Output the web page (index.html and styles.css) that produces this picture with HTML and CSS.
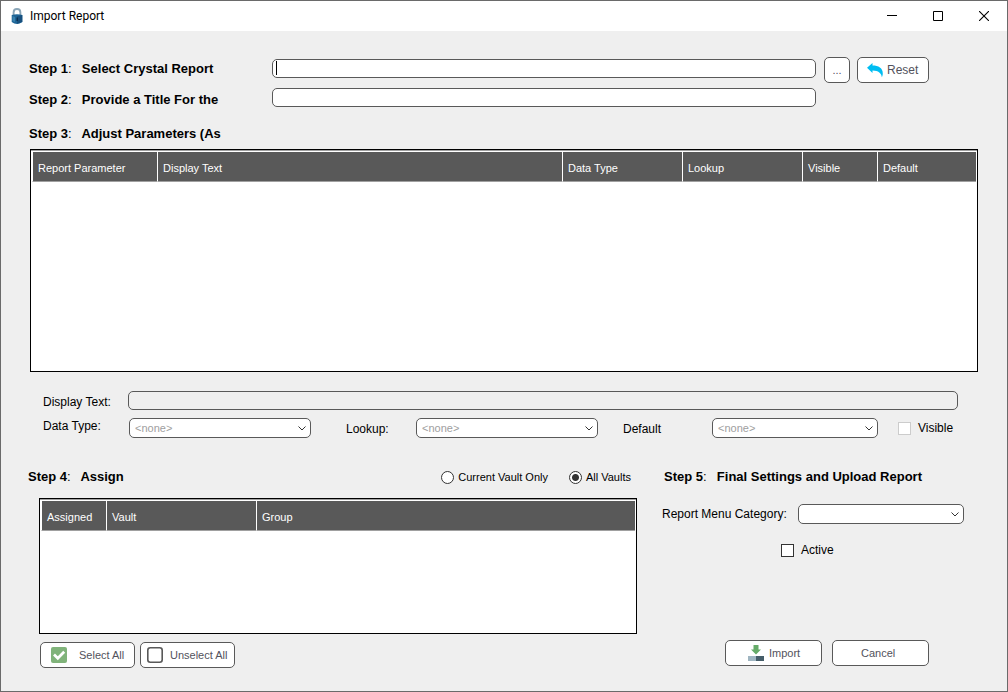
FILE: index.html
```html
<!DOCTYPE html>
<html lang="en">
<head>
<meta charset="utf-8">
<meta name="viewport" content="width=device-width, initial-scale=1">
<title>Import Report</title>
<link rel="stylesheet" href="styles.css">
</head>
<body>
<div class="window">
  <header class="titlebar">
    <svg class="app-icon" width="12" height="17" viewBox="0 0 12 17" aria-hidden="true">
      <path d="M2.600 8V4.400C2.600 2.300 4 1 6 1s3.400 1.300 3.400 3.400V8" fill="none" stroke="#8aa5b7" stroke-width="1.900"/>
      <path d="M.7 7Q6 5.300 11.300 7V14Q6 17.800 .7 14z" fill="#1d6496"/>
      <path d="M6 8.500l5.300-1.500v7L6 15.800z" fill="#17507e"/>
      <path d="M1.500 8l2.500 1v5l-2.500-1z" fill="#3a82ae"/>
      <path d="M5.500 9.500h1.500v3.500h-1.500z" fill="#0b2f52"/>
    </svg>
    <h1 class="title">Import Report</h1>
    <div class="window-buttons">
      <button class="window-button" type="button" aria-label="Minimize"><svg width="10" height="10" viewBox="0 0 10 10"><path d="M0 4.500h10" stroke="#000"/></svg></button>
      <button class="window-button" type="button" aria-label="Maximize"><svg width="10" height="10" viewBox="0 0 10 10"><path d="M.5.5h9v9h-9z" fill="none" stroke="#000"/></svg></button>
      <button class="window-button" type="button" aria-label="Close"><svg width="10" height="10" viewBox="0 0 10 10"><path d="M0 0l10 10M10 0L0 10" stroke="#000" stroke-width="1.100"/></svg></button>
    </div>
  </header>

  <main class="content">
    <section class="source">
      <label class="step" for="report-file">Step 1<span class="colon">:</span>&nbsp; Select Crystal Report</label>
      <div class="file-field">
        <input class="text-box" id="report-file" type="text">
        <span class="caret"></span>
      </div>
      <div class="source-buttons">
        <button class="button browse" type="button">...</button>
        <button class="button reset" type="button">
          <svg width="16" height="15" viewBox="0 0 16 15" aria-hidden="true"><path d="M0 4.800L5.500 0v2.500c6 0 10.300 2.500 10.300 8 0 1.500-.4 2.800-1 3.700C14.500 10.500 11.500 7.600 5.500 7.600V10z" fill="#00bdf2"/></svg>
          Reset
        </button>
      </div>
      <label class="step" for="report-title">Step 2<span class="colon">:</span>&nbsp; Provide a Title For the</label>
      <input class="text-box" id="report-title" type="text">
    </section>

    <h2 class="step parameters-heading">Step 3<span class="colon">:</span>&nbsp; Adjust Parameters (As</h2>
    <div class="grid-box parameters">
      <table class="data-grid">
        <colgroup><col class="col-parameter"><col><col class="col-medium"><col class="col-medium"><col class="col-visible"><col class="col-default"></colgroup>
        <thead><tr><th>Report Parameter</th><th>Display Text</th><th>Data Type</th><th>Lookup</th><th>Visible</th><th>Default</th></tr></thead>
      </table>
    </div>

    <section class="details">
      <div class="display-row">
        <label for="display-text">Display Text:</label>
        <input class="text-box" id="display-text" type="text" disabled>
      </div>
      <div class="options-row">
        <label class="label-top" for="data-type">Data Type:</label>
        <div class="drop-down"><select id="data-type" disabled><option>&lt;none&gt;</option></select><svg class="chevron" width="8" height="5" viewBox="0 0 8 5"><path d="M.5.5L4 4 7.500.5"/></svg></div>
        <label class="label-lookup" for="lookup">Lookup:</label>
        <div class="drop-down"><select id="lookup" disabled><option>&lt;none&gt;</option></select><svg class="chevron" width="8" height="5" viewBox="0 0 8 5"><path d="M.5.5L4 4 7.500.5"/></svg></div>
        <label class="label-default" for="default-value">Default</label>
        <div class="drop-down"><select id="default-value" disabled><option>&lt;none&gt;</option></select><svg class="chevron" width="8" height="5" viewBox="0 0 8 5"><path d="M.5.5L4 4 7.500.5"/></svg></div>
        <label class="choice visible-choice"><input class="check" type="checkbox" disabled>Visible</label>
      </div>
    </section>

    <div class="bottom">
      <section class="assign">
        <div class="assign-head">
          <h2 class="step">Step 4<span class="colon">:</span>&nbsp; Assign</h2>
          <div class="scope">
            <label class="choice radio-choice"><input class="radio" type="radio" name="scope">Current Vault Only</label>
            <label class="choice radio-choice"><input class="radio" type="radio" name="scope" checked>All Vaults</label>
          </div>
        </div>
        <div class="grid-box vaults">
          <table class="data-grid">
            <colgroup><col class="col-assigned"><col class="col-vault"><col></colgroup>
            <thead><tr><th>Assigned</th><th>Vault</th><th>Group</th></tr></thead>
          </table>
        </div>
        <div class="select-buttons">
          <button class="button select-all" type="button">
            <svg width="16" height="16" viewBox="0 0 16 16" aria-hidden="true"><rect width="16" height="16" rx="2" fill="#80b37a"/><path d="M3 7.500l3.800 3.800 6.400-6.500" fill="none" stroke="#fff" stroke-width="2.700"/></svg>
            Select All
          </button>
          <button class="button unselect-all" type="button">
            <svg width="16" height="16" viewBox="0 0 16 16" aria-hidden="true"><rect x=".8" y=".8" width="14.400" height="14.400" rx="2.500" fill="none" stroke="#595959" stroke-width="1.600"/></svg>
            Unselect All
          </button>
        </div>
      </section>

      <section class="final">
        <h2 class="step">Step 5<span class="colon">:</span>&nbsp; Final Settings and Upload Report</h2>
        <div class="category-row">
          <label for="category">Report Menu Category:</label>
          <div class="drop-down"><select id="category"><option></option></select><svg class="chevron" width="8" height="5" viewBox="0 0 8 5"><path d="M.5.5L4 4 7.500.5"/></svg></div>
        </div>
        <label class="choice active-choice"><input class="check" type="checkbox">Active</label>
        <div class="action-buttons">
          <button class="button import" type="button">
            <svg width="16" height="16" viewBox="0 0 16 16" aria-hidden="true"><path d="M5.500 0h5v4.500H13L8 9.500 3 4.500h2.500z" fill="#65ab68"/><path d="M0 11h8v5H0z" fill="#9fb5c1"/><path d="M8 11h8v5H8z" fill="#455d69"/></svg>
            Import
          </button>
          <button class="button cancel" type="button">Cancel</button>
        </div>
      </section>
    </div>
  </main>
</div>
</body>
</html>
```
FILE: styles.css
```css
* {
  box-sizing: border-box;
}

body {
  margin: 0;
  font-family: "Liberation Sans", Arial, sans-serif;
  font-size: 12px;
  line-height: 16px;
  color: #000;
}

button,
input,
select {
  font: inherit;
  margin: 0;
}

svg {
  display: block;
  flex: none;
}

.window {
  display: flex;
  flex-direction: column;
  min-height: 100vh;
  border: 1px solid #6a6a6a;
  background: #efefef;
}

.titlebar {
  display: flex;
  align-items: center;
  height: 30px;
  padding-left: 10px;
  background: #fff;
}

.title {
  flex: 1;
  margin: 0 0 0 7px;
  font: 400 12px/16px Roboto, "Noto Sans", sans-serif;
}

.window-buttons {
  display: flex;
}

.window-button {
  display: flex;
  align-items: center;
  justify-content: center;
  width: 46px;
  height: 28px;
  padding: 0;
  border: 0;
  background: none;
}

.content {
  display: flex;
  flex: 1;
  flex-direction: column;
  padding: 26px 29px 23px 27px;
}

.step {
  margin: 0;
  font-size: 13px;
  font-weight: 700;
  line-height: 24px;
  white-space: nowrap;
}

.colon {
  margin-right: 3px;
  font-weight: 400;
}

.source {
  display: grid;
  grid-template-columns: 243px minmax(0, 1fr) auto;
  row-gap: 5px;
  align-items: start;
  padding: 0 49px 0 1px;
}

.text-box {
  display: block;
  width: 100%;
  height: 19px;
  padding: 0 6px;
  border: 1px solid #595959;
  border-radius: 5px;
  background: #fff;
}

.text-box:disabled {
  background: #efefef;
}

.file-field {
  position: relative;
  padding-top: 2px;
}

.caret {
  position: absolute;
  top: 4px;
  left: 4px;
  width: 1px;
  height: 14px;
  background: #000;
}

.source-buttons {
  display: flex;
  gap: 7px;
  margin-left: 8px;
}

.button {
  display: flex;
  align-items: center;
  height: 26px;
  padding: 0;
  border: 1px solid #595959;
  border-radius: 5px;
  background: #fff;
  color: #52525c;
  font-size: 11px;
  white-space: nowrap;
}

.browse {
  justify-content: center;
  width: 26px;
}

.reset {
  gap: 4px;
  width: 72px;
  padding-left: 9px;
  font-size: 12px;
}

.parameters-heading {
  margin: 10px 0 3px 1px;
}

.grid-box {
  padding: 2px 1px 1px;
  border: 1px solid #000;
  background: #fff;
  box-shadow: inset 0 1px #a0a0a0;
}

.parameters {
  flex: 1;
  min-height: 223px;
  margin-left: 2px;
}

.data-grid {
  width: 100%;
  table-layout: fixed;
  border-spacing: 0;
}

.data-grid th {
  height: 30px;
  padding: 2px 5px 0;
  border-bottom: 1px solid #a0a0a0;
  border-left: 1px solid #fff;
  background: #595959;
  color: #fff;
  font-size: 11px;
  font-weight: 400;
  text-align: left;
}

.col-parameter {
  width: 125px;
}

.col-medium {
  width: 120px;
}

.col-visible {
  width: 75px;
}

.col-default {
  width: 99px;
}

.col-assigned {
  width: 65px;
}

.col-vault {
  width: 150px;
}

.details {
  display: flex;
  flex-direction: column;
  gap: 8px;
  margin: 19px 20px 0 15px;
}

.display-row {
  display: grid;
  grid-template-columns: 85px minmax(0, 1fr);
  align-items: end;
}

.options-row {
  display: grid;
  grid-template-columns: 86px minmax(0, 182fr) 105px minmax(0, 182fr) 114px minmax(0, 166fr) 80px;
  align-items: center;
}

.label-top {
  align-self: start;
}

.label-lookup {
  padding: 2px 0 0 35px;
}

.label-default {
  padding: 2px 0 0 25px;
}

.drop-down {
  display: grid;
  align-items: center;
}

.drop-down select {
  grid-area: 1 / 1;
  width: 100%;
  height: 20px;
  padding: 0 20px 0 5px;
  border: 1px solid #595959;
  border-radius: 5px;
  appearance: none;
  background: #fff;
  color: #000;
  font-size: 11px;
}

.drop-down select:disabled {
  color: #a0a0a0;
  opacity: 1;
}

.chevron {
  grid-area: 1 / 1;
  justify-self: end;
  margin-right: 5px;
  fill: none;
  stroke: #333;
  pointer-events: none;
}

.choice {
  display: flex;
  align-items: center;
  gap: 7px;
}

.visible-choice {
  padding-left: 20px;
}

.check,
.radio {
  flex: none;
  width: 13px;
  height: 13px;
  border: 1px solid #333;
  appearance: none;
  background: #fff;
}

.check:disabled {
  border-color: #ccc;
}

.radio {
  border-radius: 50%;
}

.radio:checked {
  background: radial-gradient(circle, #333 3px, #fff 4px);
}

.bottom {
  display: grid;
  grid-template-columns: minmax(0, 609fr) minmax(0, 316fr);
  column-gap: 25px;
  margin-top: 27px;
}

.assign-head {
  display: flex;
  align-items: center;
  justify-content: space-between;
  padding-right: 6px;
}

.scope {
  display: flex;
  gap: 21px;
}

.radio-choice {
  gap: 4px;
  font-size: 11px;
}

.vaults {
  min-height: 136px;
  margin: 9px 0 8px 11px;
}

.select-buttons {
  display: flex;
  gap: 5px;
  margin-left: 12px;
}

.select-all,
.unselect-all {
  width: 95px;
}

.select-all {
  gap: 12px;
  padding-left: 10px;
}

.unselect-all {
  gap: 7px;
  padding-left: 6px;
}

.final {
  display: flex;
  flex-direction: column;
}

.final .step {
  margin-left: 2px;
}

.category-row {
  display: grid;
  grid-template-columns: 136px minmax(0, 1fr);
  align-items: center;
  margin: 15px 14px 0 0;
}

.active-choice {
  margin: 18px 0 0 119px;
}

.action-buttons {
  display: flex;
  justify-content: flex-end;
  gap: 10px;
  margin: auto 49px 2px 0;
}

.import,
.cancel {
  gap: 5px;
  width: 97px;
  padding-left: 22px;
}

.cancel {
  padding-left: 28px;
}
```
